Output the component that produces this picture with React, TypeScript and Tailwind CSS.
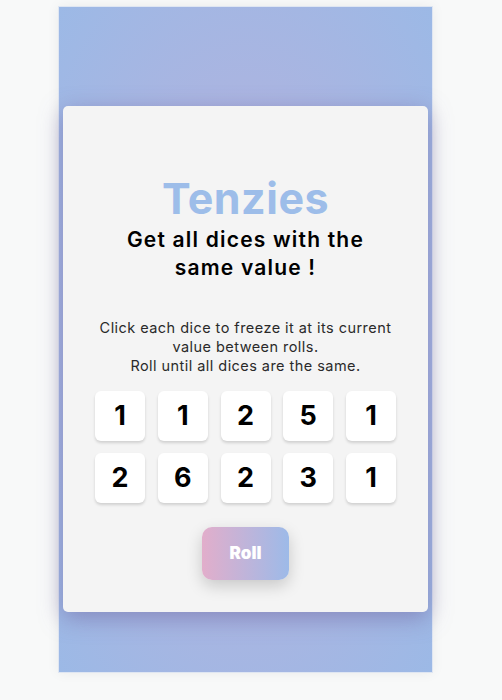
const dice = [1, 1, 2, 5, 1, 2, 6, 2, 3, 1];

function Die({ value }: { value: number }) {
  return (
    <div className="w-[50px] h-[50px] bg-white rounded-[6px] shadow-[0_2px_3px_rgba(0,0,0,0.15)] flex items-center justify-center text-[27px] font-bold text-black">
      {value}
    </div>
  );
}

export default function App() {
  return (
    <div className="min-h-[700px] bg-[#f8f9f9] pt-[6px] pl-[58px] font-['Inter',sans-serif]">
      <div className="w-[375px] h-[667px] border border-[#dfe6f2] shadow-[0_0_12px_rgba(0,0,0,0.06)] bg-[radial-gradient(ellipse_at_center,#b8b0da_0%,#acb4e0_45%,#9cb9e6_100%)] pt-[99px] px-[4px]">
        <div className="h-[506px] bg-[#f4f4f4] rounded-[5px] shadow-[0_6px_22px_rgba(110,100,160,0.55)] flex flex-col items-center pt-[66px]">
          <h1 className="text-[43px] leading-[52px] font-bold text-[#9dbde9] tracking-[0.5px]">Tenzies</h1>
          <h2 className="mt-[2px] text-[21px] leading-[28px] font-semibold text-black text-center tracking-[1.2px] w-[320px]">
            Get all dices with the
            <br />
            same value !
          </h2>
          <p className="mt-[36px] text-[14.5px] leading-[19px] text-[#2a2a2a] text-center tracking-[0.45px] w-[320px]">
            Click each dice to freeze it at its current
            <br />
            value between rolls.
            <br />
            Roll until all dices are the same.
          </p>
          <div className="mt-[16px] grid grid-cols-5 gap-x-[12.75px] gap-y-[12px]">
            {dice.map((d, i) => (
              <Die key={i} value={d} />
            ))}
          </div>
          <button className="mt-[24px] w-[87px] h-[53px] rounded-[10px] bg-[linear-gradient(90deg,#e2aecb,#9dbae8)] shadow-[0_6px_16px_rgba(0,0,0,0.18)] text-white text-[17px] font-black">
            Roll
          </button>
        </div>
      </div>
    </div>
  );
}
